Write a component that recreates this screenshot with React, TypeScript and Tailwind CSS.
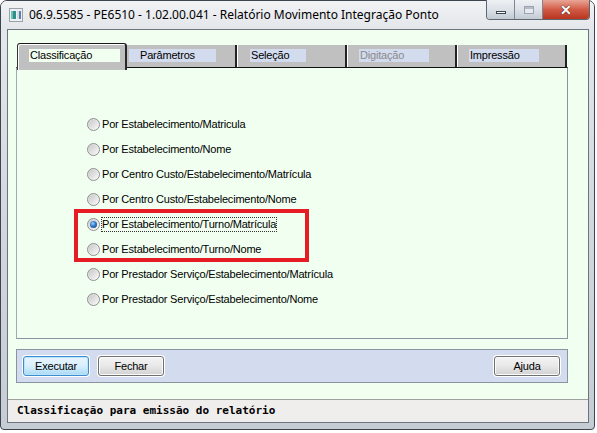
import React from "react";

function Radio({ checked }: { checked?: boolean }) {
  return (
    <span className="flex w-[13px] h-[13px] shrink-0 items-center justify-center rounded-full border border-[#8e8f8f] bg-gradient-to-br from-[#d6d6d6] to-[#fbfbfb]">
      <span className="flex w-[9px] h-[9px] items-center justify-center rounded-full bg-gradient-to-br from-[#c9c9c9] to-[#f7f7f7]">
        {checked && (
          <span className="w-[7px] h-[7px] rounded-full bg-[radial-gradient(circle_at_40%_35%,#9ad4ff_0%,#2f78c4_45%,#123f7a_100%)]" />
        )}
      </span>
    </span>
  );
}

function Btn({ label, focused }: { label: string; focused?: boolean }) {
  return (
    <div className="rounded-[4px] bg-white p-[1px]">
      <div
        className={
          focused
            ? "flex h-[20px] w-[66px] items-center justify-center rounded-[3px] border border-[#3c8ccf] bg-gradient-to-b from-[#e8f5fd] via-[#d9effc] to-[#a9daf5] text-[11px] tracking-[-0.2px] text-black shadow-[inset_0_0_0_1px_#b8e3fb]"
            : "flex h-[20px] w-[66px] items-center justify-center rounded-[3px] border border-[#707070] bg-gradient-to-b from-[#f4f4f4] via-[#e8e8e8] to-[#d2d2d2] text-[11px] tracking-[-0.2px] text-black shadow-[inset_0_0_0_1px_#fbfbfb]"
        }
      >
        {label}
      </div>
    </div>
  );
}

const options = [
  "Por Estabelecimento/Matricula",
  "Por Estabelecimento/Nome",
  "Por Centro Custo/Estabelecimento/Matrícula",
  "Por Centro Custo/Estabelecimento/Nome",
  "Por Estabelecimento/Turno/Matrícula",
  "Por Estabelecimento/Turno/Nome",
  "Por Prestador Serviço/Estabelecimento/Matrícula",
  "Por Prestador Serviço/Estabelecimento/Nome",
];

export default function App() {
  return (
    <div
      className="h-[433px] w-[597px] overflow-hidden bg-white text-black"
      style={{ fontFamily: '"Liberation Sans", Arial, sans-serif' }}
    >
      <div className="relative flex h-[430px] w-[595px] flex-col rounded-t-[7px] rounded-b-[4px] border border-[#3d4550] bg-gradient-to-b from-[#e6e9ed] via-[#d3d8de] to-[#c6ccd3]">
        {/* Title bar */}
        <div className="flex h-[28px] shrink-0 items-center pl-[8px] bg-gradient-to-b from-[#f1f3f5] to-[#e3e6ea] rounded-t-[6px]">
          <svg width="14" height="14" viewBox="0 0 14 14" className="shrink-0">
            <rect x="0.5" y="0.5" width="13" height="13" fill="#eef1f3" stroke="#9aa3aa" />
            <rect x="2" y="3" width="5" height="8" fill="#2f8f8a" />
            <rect x="2" y="3" width="2" height="8" fill="#6cc2b0" />
            <rect x="8" y="3" width="4" height="8" fill="#d3dde2" />
            <rect x="10" y="3" width="2" height="8" fill="#5a7fa8" />
          </svg>
          <span className="ml-[6px] text-[12px] text-black whitespace-nowrap" style={{ fontFamily: '"Noto Sans", "Liberation Sans", sans-serif' }}>
            06.9.5585 - PE6510 - 1.02.00.041 - Relatório Movimento Integração Ponto
          </span>
        </div>
        {/* window controls */}
        <div className="absolute right-[4px] top-[-1px] flex h-[20px] overflow-hidden rounded-b-[4px] border border-t-0 border-[#5d6875]">
          <div className="flex w-[28px] items-center justify-center border-r border-[#7d8894] bg-gradient-to-b from-[#eef1f4] via-[#dde2e8] to-[#c3cad3]">
            <span className="mt-[5px] block h-[3px] w-[10px] border border-[#3b4552] bg-white" />
          </div>
          <div className="flex w-[28px] items-center justify-center border-r border-[#7d8894] bg-gradient-to-b from-[#eef1f4] via-[#dde2e8] to-[#c3cad3]">
            <span className="block h-[8px] w-[10px] border border-[#9aa4b0] bg-[#e6e9ed] shadow-[inset_0_2px_0_#b5bdc7]" />
          </div>
          <div className="flex w-[46px] items-center justify-center bg-gradient-to-b from-[#e8a597] via-[#d15a45] to-[#b8341f]">
            <span className="text-[14px] font-bold leading-none text-white" style={{ textShadow: "0 0 1px #3a1a14, 0 0 1px #3a1a14" }}>
              ✕
            </span>
          </div>
        </div>

        {/* Client area */}
        <div className="ml-[6px] mr-[5px] flex flex-1 flex-col border border-[#6c747e] bg-[#f0fff0]">
          <div className="ml-[8px] mt-[13px] w-[552px]">
            {/* tab row */}
            <div className="relative z-10 flex h-[24px] items-end pl-[1px] text-[11px] tracking-[-0.2px]">
              <div className="mb-[-3px] h-[27px] w-[110px] rounded-t-[3px] border-t border-l border-r-2 border-t-[#1a1a1a] border-l-[#333] border-r-[#2a2a2a] bg-[#c0c0c0] shadow-[inset_1px_1px_0_#ffffff]">
                <div className="ml-[11px] mt-[5px] flex h-[13px] w-[91px] items-center bg-[#f0fff0] pl-[1px] leading-none">
                  Classificação
                </div>
              </div>
              <div className="h-[22px] w-[110px] border-r-2 border-r-[#222] bg-[#c0c0c0] pt-[4px] pl-[2px]">
                <div className="flex h-[13px] w-[87px] items-center bg-[#d3dbee] pl-[11px] leading-none">Parâmetros</div>
              </div>
              <div className="h-[22px] w-[110px] border-l border-r-2 border-l-white border-r-[#222] bg-[#c0c0c0] pt-[4px] pl-[12px]">
                <div className="flex h-[13px] w-[56px] items-center bg-[#d3dbee] pl-[1px] leading-none">Seleção</div>
              </div>
              <div className="h-[22px] w-[110px] border-l border-r-2 border-l-white border-r-[#222] bg-[#c0c0c0] pt-[4px] pl-[11px]">
                <div className="flex h-[13px] w-[70px] items-center bg-[#d3dbee] pl-[1px] leading-none text-[#8a8a8a]">Digitação</div>
              </div>
              <div className="h-[22px] w-[110px] border-l border-r-2 border-l-white border-r-[#222] bg-[#c0c0c0] pt-[4px] pl-[11px]">
                <div className="flex h-[13px] w-[70px] items-center bg-[#d3dbee] pl-[1px] leading-none">Impressão</div>
              </div>
            </div>
            {/* panel */}
            <div className="relative h-[272px] border border-t-[#111] border-l-[#a3aab6] border-r-[#8a93a1] border-b-[#8a93a1] pt-[44px] pl-[70px] text-[11px] tracking-[-0.2px]">
              {options.map((o, i) => (
                <div key={o} className="flex h-[25px] items-center">
                  <Radio checked={i === 4} />
                  <span
                    className={
                      i === 4
                        ? "ml-[1px] px-[1px] py-[2px] leading-none outline outline-1 outline-dotted outline-[#333] -outline-offset-1"
                        : "ml-[2px] leading-none"
                    }
                  >
                    {o}
                  </span>
                </div>
              ))}
              <div className="pointer-events-none absolute left-[57px] top-[141px] h-[53px] w-[235px] border-[4px] border-[#e51c23]" />
            </div>
            {/* button bar */}
            <div className="mt-[10px] flex h-[34px] items-start border border-[#8a93a1] bg-[#d3dbee] pt-[5px] pl-[5px] pr-[6px]">
              <Btn label="Executar" focused />
              <div className="ml-[7px]">
                <Btn label="Fechar" />
              </div>
              <div className="ml-auto">
                <Btn label="Ajuda" />
              </div>
            </div>
          </div>
          <div className="flex-1" />
          <div
            className="flex h-[23px] items-center border-t border-[#a0a0a0] bg-[#f0eded] pl-[9px] text-[11px] font-bold"
            style={{ fontFamily: '"DejaVu Sans Mono", "Liberation Mono", monospace' }}
          >
            Classificação para emissão do relatório
          </div>
        </div>
        <div className="h-[6px] shrink-0" />
      </div>
    </div>
  );
}
